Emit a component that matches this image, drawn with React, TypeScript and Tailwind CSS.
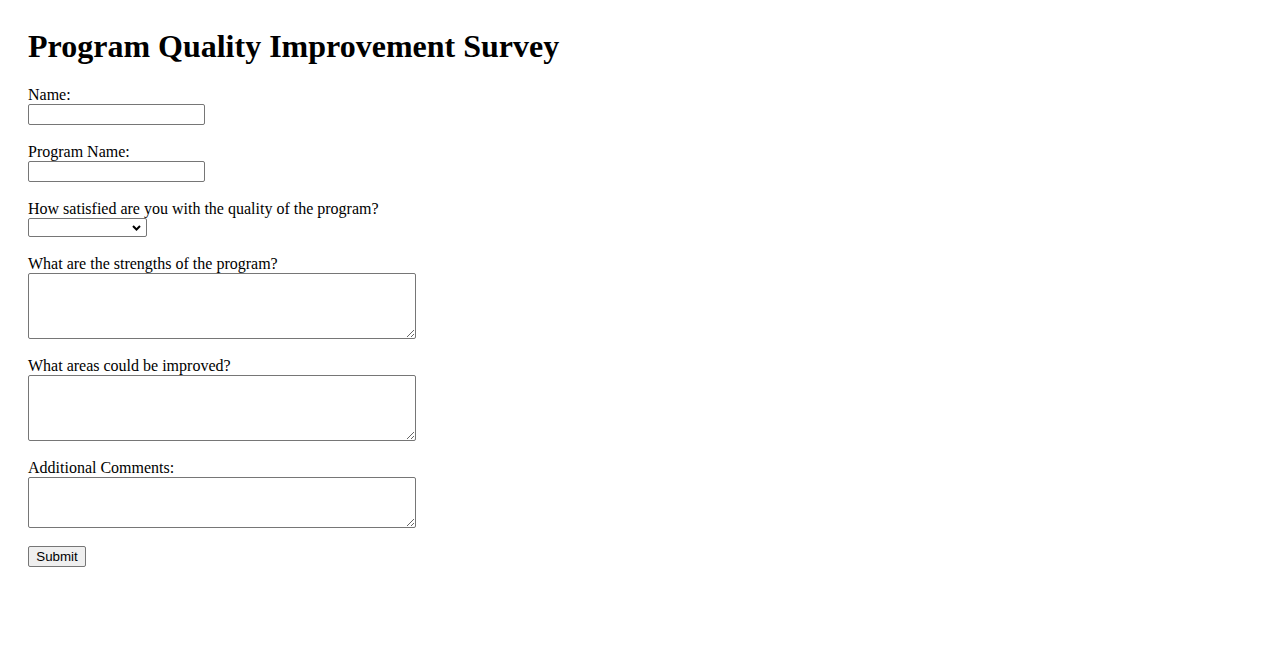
import React from "react";

const serif = "font-['Liberation_Serif','Times_New_Roman',serif]";

function Label({ children }: { children: React.ReactNode }) {
  return <label className="block text-[16px] leading-[19px] text-black">{children}</label>;
}

export default function App() {
  return (
    <div className={`min-h-[650px] bg-white pt-[29px] px-[28px] text-black ${serif}`}>
      <h1 className="m-0 text-[32px] font-bold leading-[35px] mb-[21px]">Program Quality Improvement Survey</h1>
      <form onSubmit={(e) => e.preventDefault()} className="flex flex-col items-start">
        <div className="mb-[17px]">
          <Label>Name:</Label>
          <input
            type="text"
            className="block w-[177px] h-[21px] border border-[#767676] rounded-[2px] bg-white px-[2px] text-[13.33px] font-['Liberation_Sans',Arial,sans-serif] outline-none"
          />
        </div>
        <div className="mb-[17px]">
          <Label>Program Name:</Label>
          <input
            type="text"
            className="block w-[177px] h-[21px] border border-[#767676] rounded-[2px] bg-white px-[2px] text-[13.33px] font-['Liberation_Sans',Arial,sans-serif] outline-none"
          />
        </div>
        <div className="mb-[17px]">
          <Label>How satisfied are you with the quality of the program?</Label>
          <div className="relative w-[119px] h-[19px]">
            <select
              defaultValue=""
              className="block w-[119px] h-[19px] appearance-none border border-[#767676] rounded-[2px] bg-white px-[2px] text-[13.33px] font-['Liberation_Sans',Arial,sans-serif] outline-none"
            >
              <option value=""></option>
              <option value="1">Very Satisfied</option>
              <option value="2">Satisfied</option>
              <option value="3">Neutral</option>
              <option value="4">Dissatisfied</option>
              <option value="5">Very Dissatisfied</option>
            </select>
            <svg
              className="pointer-events-none absolute right-[6px] top-[7px]"
              width="9"
              height="6"
              viewBox="0 0 9 6"
            >
              <path d="M1 1 L4.5 4.5 L8 1" fill="none" stroke="#000" strokeWidth="2" />
            </svg>
          </div>
        </div>
        <div className="mb-[17px]">
          <Label>What are the strengths of the program?</Label>
          <textarea className="block mt-[0px] w-[388px] h-[66px] border border-[#767676] rounded-[2px] bg-white p-[2px] text-[13.33px] font-['Liberation_Mono',monospace] outline-none" />
        </div>
        <div className="mb-[17px]">
          <Label>What areas could be improved?</Label>
          <textarea className="block w-[388px] h-[66px] border border-[#767676] rounded-[2px] bg-white p-[2px] text-[13.33px] font-['Liberation_Mono',monospace] outline-none" />
        </div>
        <div className="mb-[18px]">
          <Label>Additional Comments:</Label>
          <textarea className="block w-[388px] h-[51px] border border-[#767676] rounded-[2px] bg-white p-[2px] text-[13.33px] font-['Liberation_Mono',monospace] outline-none" />
        </div>
        <button
          type="submit"
          className="h-[21px] w-[58px] border border-[#767676] rounded-[2px] bg-[#efefef] px-[6px] text-[13.33px] leading-[16px] text-black font-['Liberation_Sans',Arial,sans-serif]"
        >
          Submit
        </button>
      </form>
    </div>
  );
}
